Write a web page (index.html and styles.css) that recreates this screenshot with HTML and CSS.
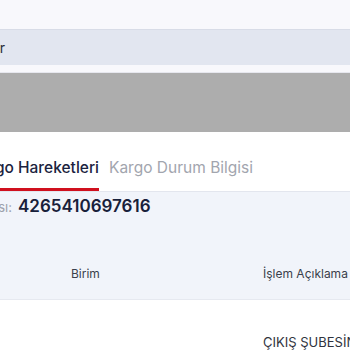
FILE: index.html
```html
<!DOCTYPE html>
<html lang="tr">
<head>
<meta charset="utf-8">
<title>Kargo Takip</title>
<link rel="stylesheet" href="styles.css">
</head>
<body>
<div class="page">
  <div class="top-space"></div>
  <div class="search">
    <div class="right-anchor search-anchor"><span class="search-text">Gönder</span></div>
  </div>
  <div class="gap-strip"></div>
  <div class="banner"></div>
  <div class="card">
    <div class="tabs">
      <div class="right-anchor tab-anchor"><span class="tab tab-active">Kargo Hareketleri</span></div>
      <span class="tab">Kargo Durum Bilgisi</span>
    </div>
    <div class="details">
      <div class="tracking">
        <div class="right-anchor track-anchor"><span class="track-label">Kargo Takip Numarası:</span></div>
        <span class="track-number">4265410697616</span>
      </div>
      <div class="table-head">
        <span class="th">Birim</span>
        <span class="th">İşlem Açıklama</span>
      </div>
    </div>
    <div class="table-row">
      <span class="td"></span>
      <span class="td td-desc">ÇIKIŞ ŞUBESİNDEN GÖNDERİLDİ</span>
    </div>
  </div>
</div>
</body>
</html>
```
FILE: styles.css
```css
html, body {
  margin: 0;
  padding: 0;
}
body {
  background: #f8f8fc;
  font-family: "Inter", "Open Sans", sans-serif;
  overflow: hidden;
  width: 350px;
  height: 350px;
}
.page {
  display: flex;
  flex-direction: column;
}
.right-anchor {
  display: flex;
  justify-content: flex-end;
  white-space: nowrap;
  flex: none;
}
.top-space {
  height: 29px;
}
.search {
  height: 35px;
  background: #e2e6f0;
  border-top: 1px solid #d8dce7;
  display: flex;
  align-items: center;
}
.search-anchor {
  width: 5px;
}
.search-text {
  font-size: 14px;
  color: #2b2f3a;
}
.gap-strip {
  height: 7px;
  background: #f8f8fc;
  border-bottom: 1px solid #e6e7ee;
}
.banner {
  height: 59px;
  background: #adadad;
}
.card {
  background: #ffffff;
  display: flex;
  flex-direction: column;
}
.tabs {
  display: flex;
  align-items: flex-end;
  gap: 10px;
  height: 59px;
  border-bottom: 1px solid #e3e6ee;
}
.tab-anchor {
  width: 99px;
}
.tab {
  font-size: 15.5px;
  line-height: 20px;
  padding-bottom: 13px;
  color: #a2a5ae;
  white-space: nowrap;
}
.tab-active {
  color: #1b2340;
  font-weight: 500;
  padding-bottom: 10px;
  border-bottom: 3px solid #d0101e;
}
.details {
  background: #f1f4fa;
  display: flex;
  flex-direction: column;
  height: 107px;
  border-bottom: 1px solid #e6e9f0;
}
.tracking {
  display: flex;
  align-items: baseline;
  gap: 6px;
  padding-top: 4px;
  height: 26px;
}
.track-anchor {
  width: 12px;
}
.track-label {
  font-size: 13px;
  color: #9ca0ab;
}
.track-number {
  font-size: 17px;
  font-weight: 600;
  color: #18203a;
}
.table-head {
  display: grid;
  grid-template-columns: 192px 1fr;
  padding-left: 71px;
  margin-top: 44px;
}
.th {
  font-size: 12px;
  color: #3a3f4b;
  white-space: nowrap;
}
.table-row {
  display: grid;
  grid-template-columns: 192px 1fr;
  padding-left: 71px;
  padding-top: 34px;
  height: 60px;
}
.td {
  font-size: 13px;
  color: #2f333d;
  white-space: nowrap;
}
```
